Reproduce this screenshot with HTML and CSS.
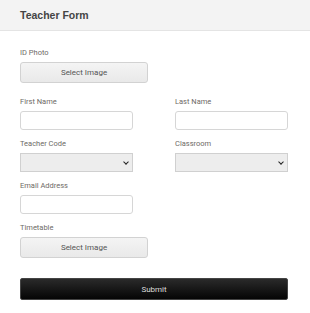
FILE: index.html
```html
<html lang="en">

<head>
    <meta charset="UTF-8">
    <meta name="viewport" content="width=device-width, initial-scale=1.0">
    <title>Teacher Form</title>
    <link rel="stylesheet" href="styles.css">
</head>

<body>
    <div class="header">
        <h1 class="title">Teacher Form</h1>
    </div>
    <form class="form">
        <div class="field">
            <label class="label">ID Photo</label>
            <button type="button" class="file-btn">Select Image</button>
        </div>
        <div class="row">
            <div class="field col">
                <label class="label">First Name</label>
                <input class="input" type="text">
            </div>
            <div class="field col">
                <label class="label">Last Name</label>
                <input class="input" type="text">
            </div>
        </div>
        <div class="row">
            <div class="field col">
                <label class="label">Teacher Code</label>
                <div class="select"><span class="chevron"></span></div>
            </div>
            <div class="field col">
                <label class="label">Classroom</label>
                <div class="select"><span class="chevron"></span></div>
            </div>
        </div>
        <div class="field">
            <label class="label">Email Address</label>
            <input class="input" type="text">
        </div>
        <div class="field">
            <label class="label">Timetable</label>
            <button type="button" class="file-btn">Select Image</button>
        </div>
        <button type="button" class="submit">Submit</button>
    </form>
</body>

</html>
```

FILE: styles.css
```css
html,
body {
    width: 100%;
    height: 100%;
    padding: 0;
    margin: 0;
    background-color: white;
    font-family: Roboto, "Liberation Sans", sans-serif;
}

.header {
    height: 30px;
    background-color: #f3f3f3;
    border-bottom: 1px solid #e4e4e4;
    display: flex;
    align-items: center;
    padding-left: 20px;
}

.title {
    margin: 0;
    font-family: "Liberation Sans", Arial, sans-serif;
    font-size: 10.5px;
    font-weight: bold;
    color: #444;
}

.form {
    padding: 17px 22px 0 20px;
    display: flex;
    flex-direction: column;
}

.row {
    display: flex;
    justify-content: space-between;
}

.field {
    display: flex;
    flex-direction: column;
    align-items: flex-start;
    margin-bottom: 9px;
}

.col {
    width: 113px;
}

.label {
    font-size: 7.5px;
    color: #6e6a66;
    height: 9px;
    line-height: 9px;
    margin-bottom: 5px;
}

.file-btn {
    width: 128px;
    height: 21px;
    border: 1px solid #d2d2d2;
    border-radius: 3px;
    background: linear-gradient(#f4f4f4, #e9e9e9);
    font-family: Roboto, "Liberation Sans", sans-serif;
    font-size: 8px;
    color: #555;
    padding: 0;
    margin-bottom: 5px;
}

.input {
    width: 113px;
    height: 19px;
    box-sizing: border-box;
    border: 1px solid #d6d6d6;
    border-radius: 3px;
    background-color: white;
}

.select {
    width: 113px;
    height: 19px;
    box-sizing: border-box;
    border: 1px solid #d0d0d0;
    background-color: #ededed;
    display: flex;
    align-items: center;
    justify-content: flex-end;
    padding-right: 4px;
}

.chevron {
    width: 3px;
    height: 3px;
    border-right: 1.5px solid #222;
    border-bottom: 1.5px solid #222;
    transform: rotate(45deg);
    margin-top: -2px;
}

.submit {
    margin-top: 6px;
    width: 268px;
    height: 22px;
    border: 1px solid #444;
    border-radius: 2px;
    background: linear-gradient(#2a2a2a, #050505);
    color: #ddd;
    font-family: Roboto, "Liberation Sans", sans-serif;
    font-size: 8px;
    padding: 0;
}
```
